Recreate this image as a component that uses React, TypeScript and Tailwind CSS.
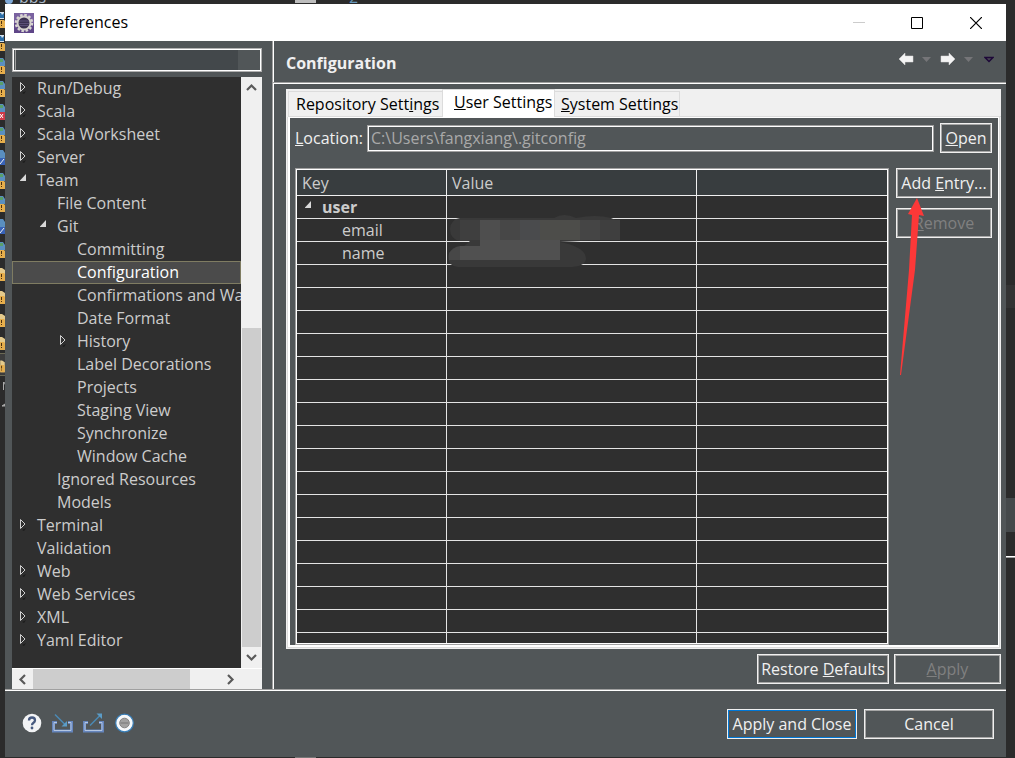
import type { ReactNode } from "react";

type TreeItem = {
  label: string;
  level: 0 | 1 | 2;
  state?: "open" | "closed";
  selected?: boolean;
};

const tree: TreeItem[] = [
  { label: "Run/Debug", level: 0, state: "closed" },
  { label: "Scala", level: 0, state: "closed" },
  { label: "Scala Worksheet", level: 0, state: "closed" },
  { label: "Server", level: 0, state: "closed" },
  { label: "Team", level: 0, state: "open" },
  { label: "File Content", level: 1 },
  { label: "Git", level: 1, state: "open" },
  { label: "Committing", level: 2 },
  { label: "Configuration", level: 2, selected: true },
  { label: "Confirmations and Warnings", level: 2 },
  { label: "Date Format", level: 2 },
  { label: "History", level: 2, state: "closed" },
  { label: "Label Decorations", level: 2 },
  { label: "Projects", level: 2 },
  { label: "Staging View", level: 2 },
  { label: "Synchronize", level: 2 },
  { label: "Window Cache", level: 2 },
  { label: "Ignored Resources", level: 1 },
  { label: "Models", level: 1 },
  { label: "Terminal", level: 0, state: "closed" },
  { label: "Validation", level: 0 },
  { label: "Web", level: 0, state: "closed" },
  { label: "Web Services", level: 0, state: "closed" },
  { label: "XML", level: 0, state: "closed" },
  { label: "Yaml Editor", level: 0, state: "closed" },
];

const indent = ["pl-2", "pl-7", "pl-12"];

function Twisty({ state }: { state?: "open" | "closed" }) {
  return (
    <svg width="17" height="23" viewBox="0 0 17 23" className="shrink-0" aria-hidden="true">
      {state === "closed" && (
        <>
          <path d="M.5 5.500v9L5 10Z" fill="none" stroke="#d0d0d0" />
          <path d="m2 16 4-2-2 3Z" fill="#1c1c1c" />
        </>
      )}
      {state === "open" && <path d="M6 5v7H-.5Z" fill="#d8d8d8" />}
    </svg>
  );
}

function Chevron({ turn }: { turn: string }) {
  return (
    <svg width="21" height="21" viewBox="0 0 21 21" className={turn} aria-hidden="true">
      <path d="m6 13 4.500-4.500L15 13" fill="none" stroke="#5a5a5a" strokeWidth="2.200" />
    </svg>
  );
}

function PushButton({ children, className = "", disabled = false, primary = false }: {
  children: ReactNode;
  className?: string;
  disabled?: boolean;
  primary?: boolean;
}) {
  const inner = primary ? "border-[#0078d7]" : "border-[#a6a6a6]";
  return (
    <button
      type="button"
      disabled={disabled}
      className={`h-[30px] shrink-0 border border-[#f0f0f0] whitespace-nowrap ${disabled ? "text-[#808080]" : "text-[#f0f0f0]"} ${className}`}
    >
      <span className={`flex h-full items-center justify-center border ${inner}`}>
        <span>{children}</span>
      </span>
    </button>
  );
}

function TitleBar() {
  return (
    <header className="flex h-[37px] shrink-0 items-center bg-white pl-[9px] text-black">
      <svg width="20" height="20" viewBox="0 0 20 20" aria-hidden="true">
        <rect width="20" height="20" fill="#7a62a0" />
        <path d="M0 10h20v10H0z" fill="#5f4688" />
        <circle cx="10" cy="10" r="8" fill="none" stroke="#d9d6d2" strokeWidth="2.500" strokeDasharray="2.500 1.690" />
        <circle cx="10" cy="10" r="6.500" fill="#3b3152" stroke="#d4d0cc" strokeWidth="2" />
        <path d="M5 8h10M5 10.500h10M5.500 12.500h9" stroke="#5b4f78" />
      </svg>
      <h1 className="grow pb-[2px] pl-[5px]">Preferences</h1>
      <button type="button" aria-label="Minimize" className="grid h-full w-[58px] place-items-center">
        <svg width="12" height="12"><path d="M0 5.500h12" stroke="#ccc" /></svg>
      </button>
      <button type="button" aria-label="Maximize" className="grid h-full w-[58px] place-items-center">
        <svg width="12" height="12"><path d="M.5.5h11v11H.5z" fill="none" stroke="#000" /></svg>
      </button>
      <button type="button" aria-label="Close" className="grid h-full w-[60px] place-items-center">
        <svg width="12" height="12"><path d="m0 0 12 12M12 0 0 12" stroke="#000" strokeWidth="1.200" /></svg>
      </button>
    </header>
  );
}

function Sidebar() {
  return (
    <nav className="flex w-[267px] shrink-0 flex-col pt-[7px] pr-[10px] pl-[7px]">
      <div className="flex h-6 border border-[#b0b0b0] bg-[#515658]">
        <div className="flex grow border border-white">
          <input aria-label="Filter" className="ml-px w-[223px] border-l border-[#a0a0a0] bg-[#43484b] outline-none" />
        </div>
      </div>
      <div className="mt-[5px] flex grow">
        <ul className="w-0 grow overflow-hidden bg-[#2f2f2f] text-[#ccc]">
          {tree.map((item) => (
            <li
              key={item.label}
              className={`flex h-[23px] items-center whitespace-nowrap ${item.selected ? "bg-[#4b4b4b] text-white outline outline-offset-[-1px] outline-[#7f7c62]" : ""} ${indent[item.level]}`}
            >
              <Twisty state={item.state} />
              <a href="#" className="pb-px">{item.label}</a>
            </li>
          ))}
        </ul>
        <div className="flex w-[21px] flex-col bg-[#f0f0f0]">
          <Chevron turn="" />
          <div className="mx-px mt-[230px] grow bg-[#cdcdcd]" />
          <Chevron turn="rotate-180" />
        </div>
      </div>
      <div className="flex h-[21px] shrink-0 border-t border-white bg-[#f0f0f0]">
        <Chevron turn="-rotate-90" />
        <div className="w-[157px] bg-[#cdcdcd]" />
        <div className="grow" />
        <Chevron turn="rotate-90" />
        <div className="w-[21px]" />
      </div>
    </nav>
  );
}

function PageHeader() {
  return (
    <div className="flex h-[43px] shrink-0 items-start border-b border-white pr-3 pl-[13px] shadow-[inset_0_-1px_#a0a0a0]">
      <h2 className="grow pt-[11px] font-bold text-[#f0f0f0]">Configuration</h2>
      <div className="flex pt-[11px]">
        <button type="button" aria-label="Back">
          <svg width="16" height="14"><path d="M1 7 7 1v3h8v6H7v3Z" fill="#f4f4f4" stroke="#d8d8d8" strokeWidth=".5" /></svg>
        </button>
        <button type="button" aria-label="Back history" className="px-2">
          <svg width="10" height="14"><path d="M0 5h9L4.500 10Z" fill="#757578" /></svg>
        </button>
        <button type="button" aria-label="Forward">
          <svg width="16" height="14"><path d="M15 7 9 1v3H1v6h8v3Z" fill="#f4f4f4" stroke="#d8d8d8" strokeWidth=".5" /></svg>
        </button>
        <button type="button" aria-label="Forward history" className="px-2">
          <svg width="10" height="14"><path d="M0 5h9L4.500 10Z" fill="#757578" /></svg>
        </button>
        <button type="button" aria-label="View menu" className="pl-[2px]">
          <svg width="10" height="14"><path d="M1 5.500h8L5 9.500Z" fill="#4b4654" stroke="#1e0838" strokeWidth="1.500" /></svg>
        </button>
      </div>
    </div>
  );
}

function Tabs() {
  return (
    <div role="tablist" className="flex h-[28px] shrink-0 items-end bg-[#f0f0f0] pl-[2px] text-black">
      <button type="button" role="tab" aria-selected="false" className="h-[26px] w-[154px] border border-r-0 border-[#dcdcdc] pl-[7px] text-left whitespace-nowrap">
        Repository Sett<u>i</u>ngs
      </button>
      <button type="button" role="tab" aria-selected="true" className="h-[28px] w-[113px] border border-b-0 border-[#dcdcdc] bg-white pb-[3px] pl-[11px] text-left whitespace-nowrap">
        <u>U</u>ser Settings
      </button>
      <button type="button" role="tab" aria-selected="false" className="h-[26px] w-[125px] border border-l-0 border-[#dcdcdc] pl-[6px] text-left whitespace-nowrap">
        <u>S</u>ystem Settings
      </button>
      <div className="grow border-b border-[#dcdcdc]" />
    </div>
  );
}

const blankRows = Array.from({ length: 16 }, (_, i) => i);

function ConfigTable() {
  const cell = "h-[23px] border-b border-[#e4e4e4] p-0";
  return (
    <div className="relative grow border border-[#a0a0a0]">
      <table className="w-full table-fixed border-separate border-spacing-0 border border-white bg-[#2f2f2f] text-left text-[#ccc]">
        <colgroup>
          <col className="w-[150px]" />
          <col className="w-[250px]" />
          <col />
        </colgroup>
        <thead className="bg-[#383d3f]">
          <tr>
            <th className="h-[26px] border-r border-b border-[#f0f0f0] p-0 pl-[5px] font-normal">Key</th>
            <th className="h-[26px] border-r border-b border-[#f0f0f0] p-0 pl-[5px] font-normal">Value</th>
            <th className="h-[26px] border-b border-[#f0f0f0] p-0" />
          </tr>
        </thead>
        <tbody>
          <tr>
            <td className={`${cell} border-r`}>
              <div className="flex h-[22px] items-center pl-2 font-bold">
                <Twisty state="open" />
                user
              </div>
            </td>
            <td className={`${cell} border-r`} />
            <td className={cell} />
          </tr>
          {["email", "name"].map((key) => (
            <tr key={key}>
              <td className={`${cell} border-r`}>
                <div className="flex h-[22px] items-center pl-[45px]">{key}</div>
              </td>
              <td className={`${cell} border-r`} />
              <td className={cell} />
            </tr>
          ))}
          {blankRows.map((row) => (
            <tr key={row}>
              <td className={`${cell} border-r`} />
              <td className={`${cell} border-r`} />
              <td className={cell} />
            </tr>
          ))}
          <tr>
            <td className="h-[10px] border-r border-[#e4e4e4] p-0" />
            <td className="h-[10px] border-r border-[#e4e4e4] p-0" />
            <td className="h-[10px] p-0" />
          </tr>
        </tbody>
      </table>
      {/* smudge over the private values */}
      <svg width="176" height="56" viewBox="0 0 176 56" className="absolute top-[44px] left-[150px]" aria-hidden="true">
        <path d="M14 5H108Q118-1 130 5 150 1 165 5L174 9V27H155L114 29Q140 34 140 46 139 54 122 54H12Q2 53 2 44 2 36 18 33L24 28H14Q4 26 4 16 5 6 14 5Z" fill="#393939" />
        <path d="M14 7h20v20H14z" fill="#3f3f3f" />
        <path d="M34 7h20v20H34z" fill="#4e4e4e" />
        <path d="M54 7h20v20H54z" fill="#474747" />
        <path d="M74 7h20v20H74z" fill="#4a4b4d" />
        <path d="M94 7h40v20H94z" fill="#4d4d4a" />
        <path d="M134 7h20v20h-20z" fill="#454545" />
        <path d="M154 7h20v20h-20z" fill="#3f3f3f" />
        <path d="M34 27h80v20H14V33h20Z" fill="#505050" />
        <path d="M3 40q4-6 11-7v14H3Z" fill="#474747" />
      </svg>
    </div>
  );
}

function UserSettings() {
  return (
    <div className="border-x border-b border-[#f0f0f0]">
      <div className="border-x border-b border-[#dcdcdc]">
        <div className="border-t border-r border-b-2 border-l-2 border-white bg-[#515658] pr-[6px]">
          <div className="flex items-center pt-[5px] pl-[5px]">
            <label htmlFor="location" className="w-[72px] text-[#f0f0f0]"><u>L</u>ocation:</label>
            <div className="flex h-[27px] w-0 grow border border-[#a0a0a0]">
              <input
                id="location"
                readOnly
                defaultValue="C:\Users\fangxiang\.gitconfig"
                className="w-0 grow border border-white bg-transparent pl-[2px] text-[#a9a9a9] outline-none"
              />
            </div>
            <PushButton className="ml-[6px] w-[52px]"><u>O</u>pen</PushButton>
          </div>
          <div className="mt-[15px] flex pl-[5px]">
            <ConfigTable />
            <div className="relative ml-[7px] flex flex-col gap-[10px]">
              <PushButton className="w-24">Add <u>E</u>ntry...</PushButton>
              <PushButton className="w-24" disabled><u>R</u>emove</PushButton>
              <svg width="32" height="180" viewBox="0 0 32 180" className="absolute top-[30px] left-[2px]" aria-hidden="true">
                <path d="m19 0 7 18-5-1-4 55L3 177H2L11 72l3-55-4-1Z" fill="#fc3838" />
              </svg>
            </div>
          </div>
        </div>
      </div>
    </div>
  );
}

function Footer() {
  return (
    <footer className="flex min-h-[68px] shrink-0 items-center border-t border-[#a0a0a0] pr-3 pl-[17px] shadow-[inset_0_1px_white]">
      <div className="flex grow gap-[10px] pb-[2px]">
        <button type="button" aria-label="Help">
          <svg width="20" height="20" viewBox="0 0 20 20">
            <circle cx="10" cy="10" r="9.300" fill="#f2f3f5" />
            <path d="M7 7.500q0-3 3-3t3 2.800q0 1.500-1.500 2.500T10 12.200" fill="none" stroke="#46597f" strokeWidth="2.300" />
            <circle cx="10" cy="15" r="1.400" fill="#46597f" />
          </svg>
        </button>
        <button type="button" aria-label="Import">
          <svg width="21" height="20" viewBox="0 0 21 20">
            <path d="M5 9.500H1.500v8.500h18V9.500H16" fill="none" stroke="#6585bd" strokeWidth="3" />
            <path d="M5 9.500H2v8h17v-8h-3" fill="none" stroke="#b4c6e2" />
            <path d="m3 1.500 10 10" stroke="#4a8ab5" strokeWidth="1.400" />
            <path d="M15 13.500V8l-5.500 5.500Z" fill="#5b9cc7" />
          </svg>
        </button>
        <button type="button" aria-label="Export">
          <svg width="21" height="20" viewBox="0 0 21 20">
            <path d="M5 9.500H1.500v8.500h18V9.500H16" fill="none" stroke="#6585bd" strokeWidth="3" />
            <path d="M5 9.500H2v8h17v-8h-3" fill="none" stroke="#b4c6e2" />
            <path d="m7 12.500 10-10" stroke="#4a8ab5" strokeWidth="1.400" />
            <path d="M19 .5V6l-5.500-5.500Z" fill="#5b9cc7" />
          </svg>
        </button>
        <button type="button" aria-label="Oomph recorder">
          <svg width="20" height="20" viewBox="0 0 20 20">
            <circle cx="10.500" cy="10" r="8.800" fill="#f7f9fb" stroke="#3a7fb8" strokeWidth="1.200" />
            <circle cx="10.500" cy="10" r="4.800" fill="#a2a2a2" stroke="#858585" />
            <path d="M6.500 10h8" stroke="#8c8c8c" strokeWidth="2" />
          </svg>
        </button>
      </div>
      <PushButton className="w-[130px]" primary>Apply and Close</PushButton>
      <PushButton className="ml-[7px] w-[130px]">Cancel</PushButton>
    </footer>
  );
}

// file markers of the workbench that show beside the dialog
const markers = [
  "xml", "xml", "web", "web", "error", "web", "edit", "web", "web", "edit", "web",
  "jar", "jar", "jar", "jar", "jar",
];

function WorkbenchLeft() {
  return (
    <aside className="w-[5px] shrink-0 overflow-hidden pt-1" aria-hidden="true">
      {markers.map((kind, i) => (
        <svg key={i} width="5" height="23" viewBox="0 0 5 23" className={`block ${i === 15 ? "border-y border-[#6b6954] bg-[#3c3c3c]" : ""}`}>
          {kind === "xml" && <path d="M0 4h4v7H0z" fill="#d5e2ee" />}
          {kind === "xml" && <path d="M0 5h1l1 2 2-2v5H0z" fill="#2d6fa8" />}
          {(kind === "web" || kind === "edit" || kind === "error") && <path d="M0 4h3l2 3v5H0z" fill="#5a8fc0" />}
          {(kind === "web" || kind === "error") && <path d="M0 5h3v3H0z" fill="#59a06a" />}
          {kind === "jar" && <path d="M0 7h2l3 2v11H0z" fill="#e5cb8c" />}
          {kind === "edit" && <path d="M0 12h5v7H0z" fill="#3863b8" />}
          {kind === "edit" && <path d="m0 18 4-5" stroke="#f2f2f2" />}
          {kind === "error" && <path d="M0 12h5v8H0z" fill="#cf3a48" />}
          {kind === "error" && <path d="m0 18 3-4M0 14l3 4" stroke="#fff" />}
          {kind !== "edit" && kind !== "error" && <path d="M0 12h4l1 1v7H0z" fill="#e6ae4c" />}
          {kind !== "edit" && kind !== "error" && <path d="M1 13h1v3H1zM1 17h1v1H1z" fill="#4a3010" />}
        </svg>
      ))}
      <svg width="5" height="40" viewBox="0 0 5 40">
        <path d="M3.500 6v8M4 6l2 4M2 30h3v-2Z" fill="#aaa" stroke="#aaa" />
      </svg>
    </aside>
  );
}

function WorkbenchRight() {
  return (
    <aside className="flex w-[9px] shrink-0 flex-col" aria-hidden="true">
      <div className="mt-[281px] h-[23px] bg-[#333]" />
      <div className="mt-[190px] h-[34px] bg-[#45494b]" />
      <div className="mt-[24px] h-[2px] border-t border-white bg-[#a0a0a0]" />
    </aside>
  );
}

export default function App() {
  return (
    <div className="flex min-h-screen flex-col bg-[#2b2b2b] font-['Open_Sans','Noto_Sans',sans-serif] text-[16px] leading-[22px]">
      <div className="flex h-1 items-end overflow-hidden pl-[5px] text-[#a9b7c6]" aria-hidden="true">
        <span className="h-1 w-2 rounded-b-full bg-[#7fa9d8]" />
        <span className="w-[282px] pl-[6px] leading-[14px]">bbs</span>
        <span className="h-[3px] w-[21px] self-start bg-[#bdbdbd]" />
        <span className="pl-[33px] leading-[14px] text-[#6897bb]">2</span>
      </div>
      <div className="flex grow">
        <WorkbenchLeft />
        <main className="flex w-0 grow flex-col bg-[#515658]">
          <TitleBar />
          <div className="flex grow">
            <Sidebar />
            <section className="flex w-0 grow flex-col border-l border-[#a0a0a0] shadow-[inset_1px_0_white]">
              <PageHeader />
              <div className="flex grow flex-col pt-[5px] pr-[5px] pl-[13px]">
                <Tabs />
                <UserSettings />
                <div className="flex justify-end gap-[5px] py-[5px]">
                  <PushButton className="w-[132px]">Restore <u>D</u>efaults</PushButton>
                  <PushButton className="w-[107px]" disabled><u>A</u>pply</PushButton>
                </div>
              </div>
            </section>
          </div>
          <Footer />
        </main>
        <WorkbenchRight />
      </div>
      <div className="h-px pl-[295px]">
        <div className="h-px w-[21px] bg-[#777]" />
      </div>
    </div>
  );
}
